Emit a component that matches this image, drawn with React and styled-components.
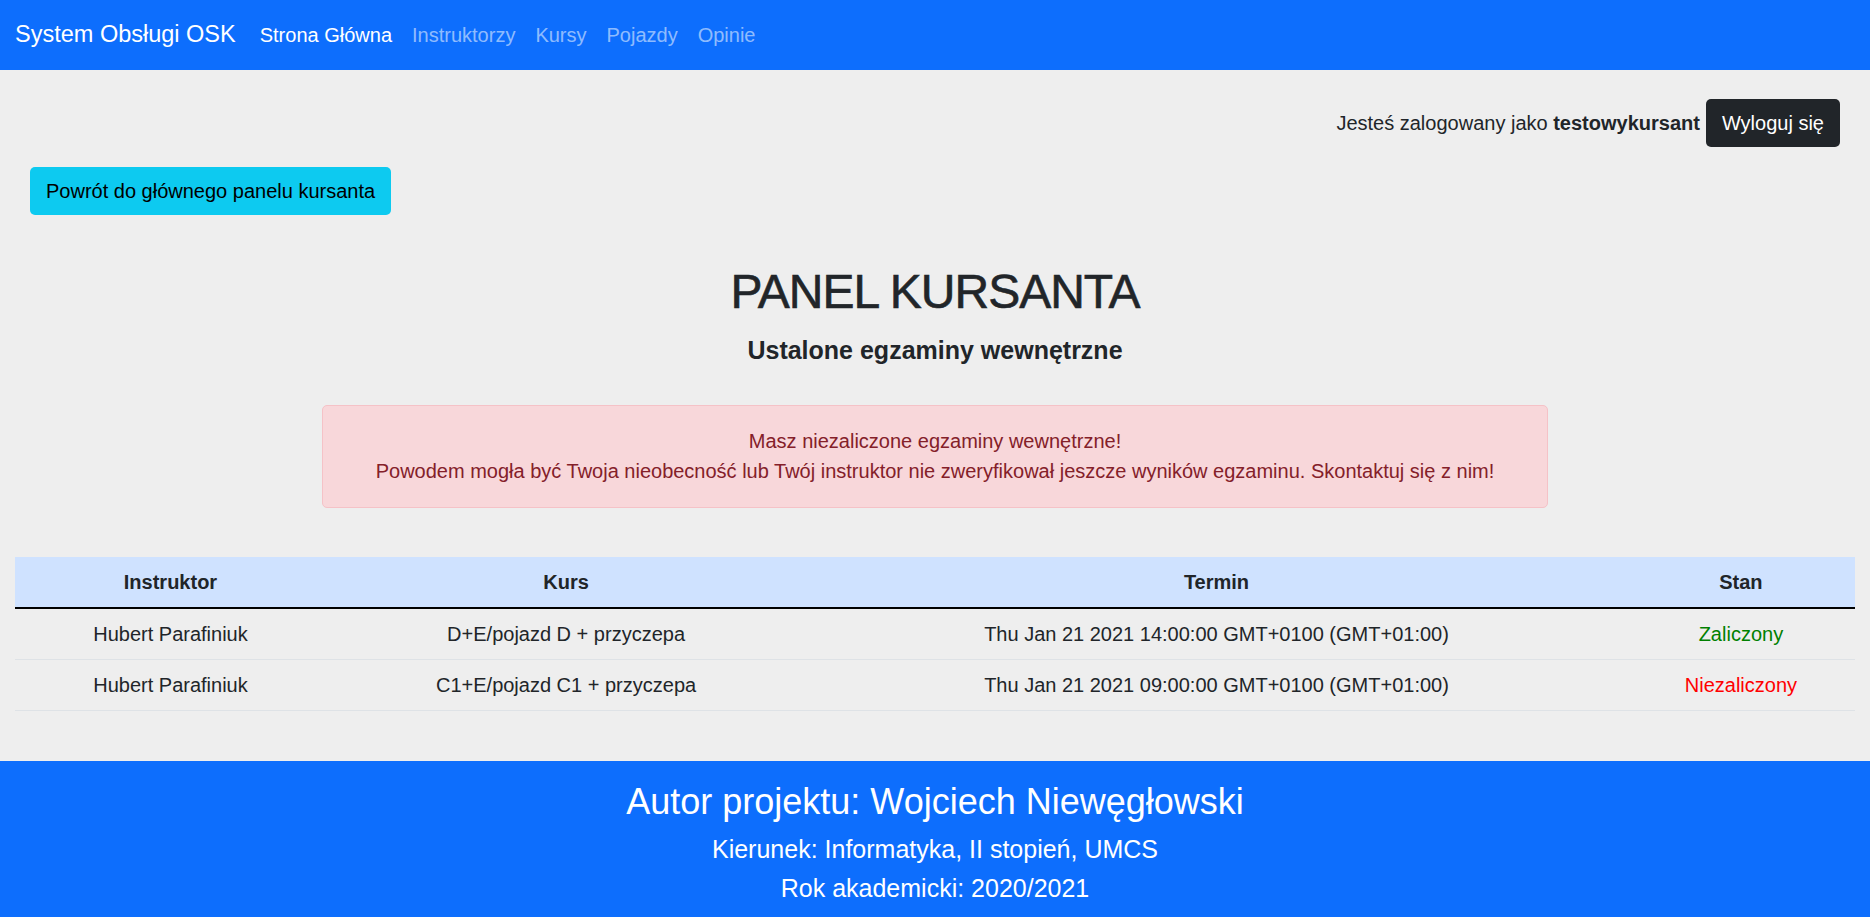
import React from 'react'
import styled, { createGlobalStyle } from 'styled-components'

const exams = [
  { instructor: 'Hubert Parafiniuk', course: 'D+E/pojazd D + przyczepa', date: 'Thu Jan 21 2021 14:00:00 GMT+0100 (GMT+01:00)', passed: true },
  { instructor: 'Hubert Parafiniuk', course: 'C1+E/pojazd C1 + przyczepa', date: 'Thu Jan 21 2021 09:00:00 GMT+0100 (GMT+01:00)', passed: false },
]

const links = ['Strona Główna', 'Instruktorzy', 'Kursy', 'Pojazdy', 'Opinie']

class App extends React.Component {
  render() {
    return (
      <>
        <GlobalStyle />
        <Navbar>
          <Brand>System Obsługi OSK</Brand>
          {links.map((l, i) => (
            <NavLink key={l} active={i === 0}>{l}</NavLink>
          ))}
        </Navbar>

        <Main>
          <UserBar>
            <span>Jesteś zalogowany jako <b>testowykursant</b></span>
            <DarkButton>Wyloguj się</DarkButton>
          </UserBar>

          <BackRow>
            <InfoButton>Powrót do głównego panelu kursanta</InfoButton>
          </BackRow>

          <Title>PANEL KURSANTA</Title>
          <Subtitle>Ustalone egzaminy wewnętrzne</Subtitle>

          <Alert>
            Masz niezaliczone egzaminy wewnętrzne!<br />
            Powodem mogła być Twoja nieobecność lub Twój instruktor nie zweryfikował jeszcze wyników egzaminu. Skontaktuj się z nim!
          </Alert>

          <Table>
            <colgroup>
              <col style={{ width: '16.9%' }} />
              <col style={{ width: '26.1%' }} />
              <col style={{ width: '44.6%' }} />
              <col style={{ width: '12.4%' }} />
            </colgroup>
            <thead>
              <tr>
                <Th>Instruktor</Th>
                <Th>Kurs</Th>
                <Th>Termin</Th>
                <Th>Stan</Th>
              </tr>
            </thead>
            <tbody>
              {exams.map((e, i) => (
                <tr key={i}>
                  <Td>{e.instructor}</Td>
                  <Td>{e.course}</Td>
                  <Td>{e.date}</Td>
                  <Td status={e.passed ? 'ok' : 'fail'}>{e.passed ? 'Zaliczony' : 'Niezaliczony'}</Td>
                </tr>
              ))}
            </tbody>
          </Table>
        </Main>

        <Footer>
          <FooterTitle>Autor projektu: Wojciech Niewęgłowski</FooterTitle>
          <FooterLine>Kierunek: Informatyka, II stopień, UMCS</FooterLine>
          <FooterLine>Rok akademicki: 2020/2021</FooterLine>
        </Footer>
      </>
    )
  }
}

/* STYLE */
const GlobalStyle = createGlobalStyle`
  body {
    margin: 0;
    background: #eeeeee;
    font-family: "Liberation Sans", Arial, sans-serif;
    font-size: 20px;
    line-height: 1.5;
    color: #212529;
  }
`

const Navbar = styled.nav`
  height: 70px;
  background: #0d6efd;
  display: flex;
  align-items: center;
  padding: 0 15px;
`

const Brand = styled.div`
  font-size: 23.5px;
  color: #fff;
  margin-right: 14px;
`

const NavLink = styled.a`
  padding: 0 10px;
  color: ${p => (p.active ? '#fff' : 'rgba(255, 255, 255, .55)')};
  cursor: pointer;
`

const Main = styled.main`
  padding: 0 15px;
`

const UserBar = styled.div`
  display: flex;
  justify-content: flex-end;
  align-items: center;
  gap: 6px;
  margin-top: 29px;
  padding-right: 15px;
`

const Button = styled.button`
  font-family: inherit;
  font-size: 20px;
  line-height: 30px;
  padding: 8px 15px;
  border-radius: 5px;
  border: 1px solid transparent;
`

const DarkButton = styled(Button)`
  background: #212529;
  color: #fff;
`

const InfoButton = styled(Button)`
  background: #0dcaf0;
  color: #000;
`

const BackRow = styled.div`
  margin-top: 20px;
  padding-left: 15px;
`

const Title = styled.h1`
  text-align: center;
  font-size: 48px;
  font-weight: 400;
  letter-spacing: -1px;
  -webkit-text-stroke: 0.6px #212529;
  line-height: 1.2;
  margin: 48px 0 14px;
`

const Subtitle = styled.h5`
  text-align: center;
  font-size: 25px;
  font-weight: 700;
  line-height: 1.2;
  margin: 0 0 40px;
`

const Alert = styled.div`
  width: 1226px;
  box-sizing: border-box;
  margin: 0 auto 49px;
  padding: 20px 20px 21px;
  background: #f8d7da;
  border: 1px solid #f5c2c7;
  border-radius: 5px;
  color: #842029;
  text-align: center;
  line-height: 30px;
`

const Table = styled.table`
  width: 100%;
  border-collapse: collapse;
  table-layout: fixed;
  margin-bottom: 50px;
`

const Th = styled.th`
  background: #cfe2ff;
  padding: 10px;
  line-height: 30px;
  font-weight: 700;
  border-bottom: 2px solid #000;
`

const Td = styled.td`
  padding: 10px;
  line-height: 30px;
  text-align: center;
  border-bottom: 1px solid #dee2e6;
  color: ${p => (p.status === 'ok' ? '#008000' : p.status === 'fail' ? '#ff0000' : '#212529')};
`

const Footer = styled.footer`
  background: #0d6efd;
  color: #fff;
  text-align: center;
  padding: 19px 0 30px;
`

const FooterTitle = styled.h3`
  font-size: 36px;
  font-weight: 400;
  line-height: 1.2;
  margin: 0 0 11px;
`

const FooterLine = styled.h5`
  font-size: 25px;
  font-weight: 400;
  line-height: 1.2;
  margin: 0 0 9px;
`

export default App
